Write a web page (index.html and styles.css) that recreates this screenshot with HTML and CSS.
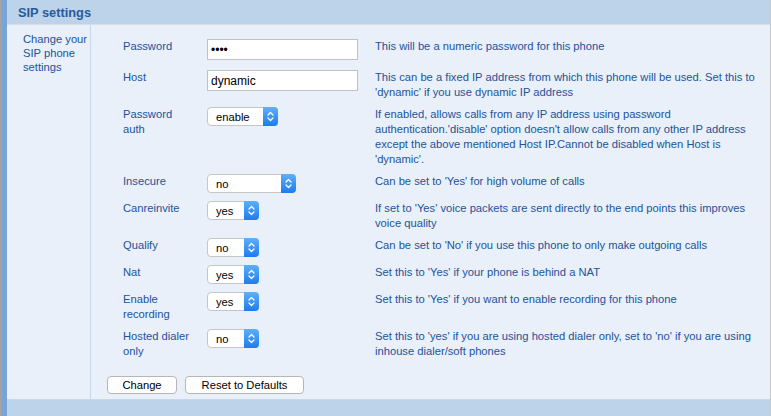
FILE: index.html
```html
<!DOCTYPE html>
<html>
<head>
<meta charset="utf-8">
<link rel="stylesheet" href="styles.css">
</head>
<body>
<div class="panel">
  <div class="panel-head">SIP settings</div>
  <div class="panel-body">
    <div class="side">Change your SIP phone settings</div>
    <div class="main">
      <div class="form">
        <div class="lbl">Password</div>
        <div class="ctl"><input class="txt" type="password" value="abcd"></div>
        <div class="desc">This will be a numeric password for this phone</div>

        <div class="lbl">Host</div>
        <div class="ctl"><input class="txt" type="text" value="dynamic"></div>
        <div class="desc">This can be a fixed IP address from which this phone will be used. Set this to 'dynamic' if you use dynamic IP address</div>

        <div class="lbl">Password auth</div>
        <div class="ctl"><span class="sel sel-md"><select><option>enable</option></select><span class="arrow"><svg width="15" height="19" viewBox="0 0 15 19"><path d="M5 8 L7.5 5.5 L10 8 M5 11 L7.5 13.5 L10 11" fill="none" stroke="#fff" stroke-width="1.3" stroke-linecap="round" stroke-linejoin="round"/></svg></span></span></div>
        <div class="desc">If enabled, allows calls from any IP address using password authentication.'disable' option doesn't allow calls from any other IP address except the above mentioned Host IP.Cannot be disabled when Host is 'dynamic'.</div>

        <div class="lbl">Insecure</div>
        <div class="ctl"><span class="sel sel-lg"><select><option>no</option></select><span class="arrow"><svg width="15" height="19" viewBox="0 0 15 19"><path d="M5 8 L7.5 5.5 L10 8 M5 11 L7.5 13.5 L10 11" fill="none" stroke="#fff" stroke-width="1.3" stroke-linecap="round" stroke-linejoin="round"/></svg></span></span></div>
        <div class="desc">Can be set to 'Yes' for high volume of calls</div>

        <div class="lbl">Canreinvite</div>
        <div class="ctl"><span class="sel sel-sm"><select><option>yes</option></select><span class="arrow"><svg width="15" height="19" viewBox="0 0 15 19"><path d="M5 8 L7.5 5.5 L10 8 M5 11 L7.5 13.5 L10 11" fill="none" stroke="#fff" stroke-width="1.3" stroke-linecap="round" stroke-linejoin="round"/></svg></span></span></div>
        <div class="desc">If set to 'Yes' voice packets are sent directly to the end points this improves voice quality</div>

        <div class="lbl">Qualify</div>
        <div class="ctl"><span class="sel sel-sm"><select><option>no</option></select><span class="arrow"><svg width="15" height="19" viewBox="0 0 15 19"><path d="M5 8 L7.5 5.5 L10 8 M5 11 L7.5 13.5 L10 11" fill="none" stroke="#fff" stroke-width="1.3" stroke-linecap="round" stroke-linejoin="round"/></svg></span></span></div>
        <div class="desc">Can be set to 'No' if you use this phone to only make outgoing calls</div>

        <div class="lbl">Nat</div>
        <div class="ctl"><span class="sel sel-sm"><select><option>yes</option></select><span class="arrow"><svg width="15" height="19" viewBox="0 0 15 19"><path d="M5 8 L7.5 5.5 L10 8 M5 11 L7.5 13.5 L10 11" fill="none" stroke="#fff" stroke-width="1.3" stroke-linecap="round" stroke-linejoin="round"/></svg></span></span></div>
        <div class="desc">Set this to 'Yes' if your phone is behind a NAT</div>

        <div class="lbl">Enable recording</div>
        <div class="ctl"><span class="sel sel-sm"><select><option>yes</option></select><span class="arrow"><svg width="15" height="19" viewBox="0 0 15 19"><path d="M5 8 L7.5 5.5 L10 8 M5 11 L7.5 13.5 L10 11" fill="none" stroke="#fff" stroke-width="1.3" stroke-linecap="round" stroke-linejoin="round"/></svg></span></span></div>
        <div class="desc">Set this to 'Yes' if you want to enable recording for this phone</div>

        <div class="lbl">Hosted dialer only</div>
        <div class="ctl"><span class="sel sel-sm"><select><option>no</option></select><span class="arrow"><svg width="15" height="19" viewBox="0 0 15 19"><path d="M5 8 L7.5 5.5 L10 8 M5 11 L7.5 13.5 L10 11" fill="none" stroke="#fff" stroke-width="1.3" stroke-linecap="round" stroke-linejoin="round"/></svg></span></span></div>
        <div class="desc">Set this to 'yes' if you are using hosted dialer only, set to 'no' if you are using inhouse dialer/soft phones</div>
      </div>
      <div class="actions">
        <button class="btn btn-change">Change</button>
        <button class="btn btn-reset">Reset to Defaults</button>
      </div>
    </div>
  </div>
  <div class="panel-foot"></div>
</div>
</body>
</html>
```

FILE: styles.css
```css
html, body {
  margin: 0;
  padding: 0;
  height: 100%;
}
body {
  background: #e9f0f9;
  border-left: 2px solid #a2a2a2;
  font-family: "Liberation Sans", Arial, sans-serif;
  font-size: 11.2px;
  color: #22539a;
  overflow: hidden;
}
.panel {
  border-left: 5px solid #78a5d6;
  border-right: 1px solid #c9c9c9;
  min-height: 416px;
  display: flex;
  flex-direction: column;
  background: #e9f0f9;
}
.panel-head {
  height: 24px;
  background: #bdd3ea;
  border-bottom: 1px solid #d5dfea;
  box-sizing: content-box;
  padding-left: 11px;
  display: flex;
  align-items: center;
  font-size: 12.8px;
  font-weight: bold;
  color: #275a9c;
}
.panel-body {
  display: flex;
  border-bottom: 1px solid #c8d8ea;
}
.side {
  width: 67px;
  padding: 7px 0 0 16px;
  border-right: 1px solid #c8d8ec;
  line-height: 14px;
  flex-shrink: 0;
}
.main {
  flex: 1;
  padding: 14px 0 5px 16px;
}
.form {
  margin-left: 16px;
  display: grid;
  grid-template-columns: 70px 154px 387px;
  column-gap: 14px;
  row-gap: 7px;
  line-height: 15px;
}
.form > div {
  min-height: 15px;
}
.ctl {
  display: flex;
  align-items: flex-start;
}
.txt {
  width: 151px;
  height: 21px;
  margin: 0 0 3px 0;
  box-sizing: border-box;
  border: 1px solid #c2c2c2;
  background: #fff;
  font-family: "Liberation Sans", Arial, sans-serif;
  font-size: 12px;
  color: #000;
  padding: 0 3px;
  outline: none;
}
.sel {
  position: relative;
  display: inline-block;
  height: 19px;
  margin-bottom: 1px;
}
.sel-sm { width: 52px; }
.sel-md { width: 71px; }
.sel-lg { width: 89px; }
.sel select {
  -webkit-appearance: none;
  appearance: none;
  width: 100%;
  height: 19px;
  box-sizing: border-box;
  border: 1px solid #c6c6c6;
  border-radius: 4px;
  background: #fff;
  font-family: "Liberation Sans", Arial, sans-serif;
  font-size: 11.2px;
  color: #000;
  padding: 0 0 0 8px;
  margin: 0;
  outline: none;
}
.arrow {
  position: absolute;
  right: 0;
  top: 0;
  width: 15px;
  height: 19px;
  border-radius: 0 4px 4px 0;
  background: linear-gradient(#5fb0f8, #1c7cf0);
  display: block;
}
.arrow svg {
  display: block;
}
.actions {
  display: flex;
  gap: 8px;
  margin-top: 17px;
}
.btn {
  height: 18px;
  box-sizing: border-box;
  border: 1px solid #b6b6b6;
  border-radius: 4px;
  background: #fff;
  font-family: "Liberation Sans", Arial, sans-serif;
  font-size: 11.2px;
  color: #000;
  padding: 0;
  margin: 0;
}
.btn-change { width: 70px; }
.btn-reset { width: 119px; }
.panel-foot {
  flex: 1;
  background: #bdd3ea;
}
```
